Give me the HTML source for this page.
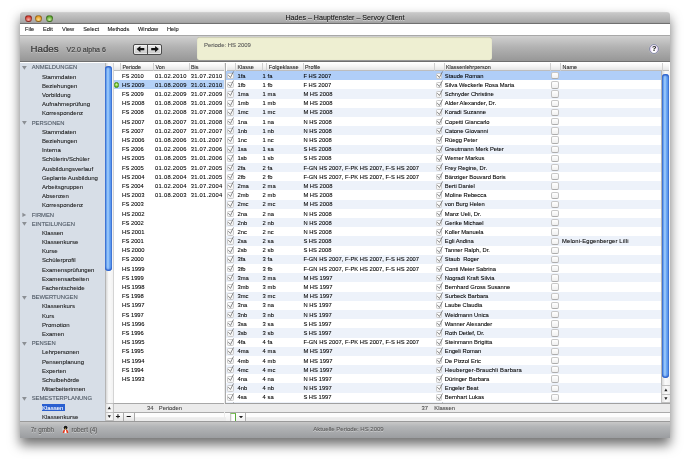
<!DOCTYPE html>
<html lang="de"><head><meta charset="utf-8"><title>Hades – Hauptfenster – Servoy Client</title>
<style>
*{box-sizing:border-box;margin:0;padding:0}
html,body{width:690px;height:465px;background:#fff;overflow:hidden}
body{font-family:"Liberation Sans",sans-serif;font-size:5.8px;color:#000;position:relative;-webkit-text-stroke:.08px currentColor}
.abs,.win *{position:absolute}
.win{position:absolute;left:20px;top:12px;width:650px;height:426px;background:#fff;border-radius:3px 3px 0 0;
 box-shadow:0 6.5px 12px rgba(0,0,0,.56);will-change:opacity;filter:contrast(1)}
.title{left:0;top:0;width:650px;height:12px;border-radius:3px 3px 0 0;background:linear-gradient(#d6d6d6,#c8c8c8 8%,#a7a7a7 87%,#707070 94%,#707070);}
.title .t{left:0;width:650px;top:0;height:12px;line-height:12px;text-align:center;font-size:7.1px;color:#111;text-shadow:0 .5px 0 rgba(255,255,255,.5)}
.dot{width:7.2px;height:7.2px;border-radius:50%;top:2.7px}
.menu{left:0;top:12px;width:650px;height:11px;background:#fff}
.menu span{top:0;height:11px;line-height:11px;font-size:5.7px;color:#111}
.tool{left:0;top:22.6px;width:650px;height:27.9px;background:linear-gradient(#d0d0d0,#b2b2b2 45%,#979797);border-top:1px solid #a8a8a8;border-bottom:1px solid #6f6f6f}
.row{left:0;height:9.19px;line-height:9.19px;white-space:nowrap}
.row span{top:.7px;height:9.19px;line-height:9.19px;white-space:pre}
.side{left:0;top:50.5px;width:84.5px;height:358.5px;background:#d7dee7;overflow:hidden}
.side .g{color:#525c68;-webkit-text-stroke:.12px #525c68;left:11.7px;font-size:5.85px}
.side .i{color:#1a1a1a;left:21.9px;font-size:6.05px;letter-spacing:.01px}
.side .tri{left:2px;top:3.1px;width:4.8px;height:3.8px}
.hdr{height:8.5px;background:linear-gradient(#fff,#f4f4f4 50%,#e6e6e6);border-bottom:1px solid #bdbdbd;top:50.5px}
.hdr span{top:0;height:8px;line-height:8.2px;color:#222;font-size:5.4px;border-left:1px solid #cfcfcf;padding-left:1.5px;white-space:nowrap}
.row .cb{width:6.4px;height:6.6px;border:.7px solid #cbcbcb;border-radius:1.4px;background:linear-gradient(#fff,#f0f0f0);top:1.7px}
.row .ck{top:0;width:8px;height:9px}
</style></head><body>
<div class="win">

<div class="title"><div class="t">Hades – Hauptfenster – Servoy Client</div>
<div class="dot" style="left:4.6px;background:radial-gradient(circle at 50% 75%,#f9b4aa,#d63a2e 75%);border:.5px solid rgba(0,0,0,.35)"></div>
<div class="dot" style="left:15.3px;background:radial-gradient(circle at 50% 75%,#fbe08e,#e59a22 75%);border:.5px solid rgba(0,0,0,.35)"></div>
<div class="dot" style="left:26.1px;background:radial-gradient(circle at 50% 75%,#c9eca0,#5aa62c 75%);border:.5px solid rgba(0,0,0,.35)"></div>
</div>
<div class="menu">
<span style="left:5px">File</span>
<span style="left:23px">Edit</span>
<span style="left:42px">View</span>
<span style="left:63.3px">Select</span>
<span style="left:87.5px">Methods</span>
<span style="left:118px">Window</span>
<span style="left:147px">Help</span>
</div>
<div class="tool"><div style="left:0;top:.4px;width:650px;height:26px">
<div style="left:10.5px;top:5.6px;font-size:9.7px;line-height:14px;color:#383838;-webkit-text-stroke:.22px #383838;text-shadow:0 .6px 0 rgba(255,255,255,.35)">Hades</div>
<div style="left:46.5px;top:8px;font-size:7px;line-height:12px;color:#3c3c3c;-webkit-text-stroke:.15px #3c3c3c;white-space:nowrap;text-shadow:0 .6px 0 rgba(255,255,255,.3)">V2.0 alpha 6</div>
<div style="left:112.5px;top:8.5px;width:29.4px;height:10.2px;border:1px solid #4a4a4a;border-radius:2px;background:linear-gradient(#ececec,#c8c8c8);box-shadow:inset 0 0 0 .7px rgba(255,255,255,.7)"></div>
<div style="left:126.8px;top:9px;width:1px;height:9px;background:#4a4a4a"></div>
<svg style="left:112.5px;top:8.5px" width="30" height="10.2" viewBox="0 0 30 10.2"><path d="M3.6 5.1 L7.4 1.9 V4 H11.3 V6.2 H7.4 V8.3 Z" fill="#111"/><path d="M25.9 5.1 L22.1 1.9 V4 H18.2 V6.2 H22.1 V8.3 Z" fill="#111"/></svg>
<div style="left:177px;top:1.5px;width:295px;height:22.3px;background:#eeefd2;border-radius:2.5px;box-shadow:inset 0 .6px 1px rgba(0,0,0,.25)"></div>
<div style="left:184px;top:4.6px;font-size:5.95px;line-height:8px;color:#555;white-space:nowrap">Periode: HS 2009</div>
<div style="left:629px;top:7.7px;width:10.2px;height:10.2px;border-radius:50%;background:radial-gradient(ellipse 38% 60% at 50% 55%,#fff 70%,#e6d6f4);border:1px solid #8a90aa;box-shadow:0 0 .8px rgba(255,255,255,.6)"></div>
<div style="left:629px;top:7.7px;width:10.2px;height:10.2px;line-height:10.6px;text-align:center;font-size:7.2px;font-weight:bold;color:#111">?</div>
</div></div>
<div class="side">
<div class="row" style="top:0.30px"><svg class="tri" viewBox="0 0 4.8 3.8" style="overflow:visible"><path d="M0 0H4.8L2.4 3.8Z" fill="#8b8f94"/></svg><span class="g">ANMELDUNGEN</span></div>
<div class="row" style="top:9.49px"><span class="i">Stammdaten</span></div>
<div class="row" style="top:18.68px"><span class="i">Beziehungen</span></div>
<div class="row" style="top:27.87px"><span class="i">Vorbildung</span></div>
<div class="row" style="top:37.06px"><span class="i">Aufnahmeprüfung</span></div>
<div class="row" style="top:46.25px"><span class="i">Korrespondenz</span></div>
<div class="row" style="top:55.44px"><svg class="tri" viewBox="0 0 4.8 3.8" style="overflow:visible"><path d="M0 0H4.8L2.4 3.8Z" fill="#8b8f94"/></svg><span class="g">PERSONEN</span></div>
<div class="row" style="top:64.63px"><span class="i">Stammdaten</span></div>
<div class="row" style="top:73.82px"><span class="i">Beziehungen</span></div>
<div class="row" style="top:83.01px"><span class="i">Interna</span></div>
<div class="row" style="top:92.20px"><span class="i">Schülerin/Schüler</span></div>
<div class="row" style="top:101.39px"><span class="i">Ausbildungsverlauf</span></div>
<div class="row" style="top:110.58px"><span class="i">Geplante Ausbildung</span></div>
<div class="row" style="top:119.77px"><span class="i">Arbeitsgruppen</span></div>
<div class="row" style="top:128.96px"><span class="i">Absenzen</span></div>
<div class="row" style="top:138.15px"><span class="i">Korrespondenz</span></div>
<div class="row" style="top:147.34px"><svg class="tri" viewBox="0 0 4.8 3.8" style="overflow:visible"><path d="M.4 -.3L4.2 1.9L.4 4.1Z" fill="#8b8f94"/></svg><span class="g">FIRMEN</span></div>
<div class="row" style="top:156.53px"><svg class="tri" viewBox="0 0 4.8 3.8" style="overflow:visible"><path d="M0 0H4.8L2.4 3.8Z" fill="#8b8f94"/></svg><span class="g">EINTEILUNGEN</span></div>
<div class="row" style="top:165.72px"><span class="i">Klassen</span></div>
<div class="row" style="top:174.91px"><span class="i">Klassenkurse</span></div>
<div class="row" style="top:184.10px"><span class="i">Kurse</span></div>
<div class="row" style="top:193.29px"><span class="i">Schülerprofil</span></div>
<div class="row" style="top:202.48px"><span class="i">Examensprüfungen</span></div>
<div class="row" style="top:211.67px"><span class="i">Examensarbeiten</span></div>
<div class="row" style="top:220.86px"><span class="i">Fachentscheide</span></div>
<div class="row" style="top:230.05px"><svg class="tri" viewBox="0 0 4.8 3.8" style="overflow:visible"><path d="M0 0H4.8L2.4 3.8Z" fill="#8b8f94"/></svg><span class="g">BEWERTUNGEN</span></div>
<div class="row" style="top:239.24px"><span class="i">Klassenkurs</span></div>
<div class="row" style="top:248.43px"><span class="i">Kurs</span></div>
<div class="row" style="top:257.62px"><span class="i">Promotion</span></div>
<div class="row" style="top:266.81px"><span class="i">Examen</span></div>
<div class="row" style="top:276.00px"><svg class="tri" viewBox="0 0 4.8 3.8" style="overflow:visible"><path d="M0 0H4.8L2.4 3.8Z" fill="#8b8f94"/></svg><span class="g">PENSEN</span></div>
<div class="row" style="top:285.19px"><span class="i">Lehrpersonen</span></div>
<div class="row" style="top:294.38px"><span class="i">Pensenplanung</span></div>
<div class="row" style="top:303.57px"><span class="i">Experten</span></div>
<div class="row" style="top:312.76px"><span class="i">Schulbehörde</span></div>
<div class="row" style="top:321.95px"><span class="i">Mitarbeiterinnen</span></div>
<div class="row" style="top:331.14px"><svg class="tri" viewBox="0 0 4.8 3.8" style="overflow:visible"><path d="M0 0H4.8L2.4 3.8Z" fill="#8b8f94"/></svg><span class="g">SEMESTERPLANUNG</span></div>
<div class="row" style="top:340.33px"><span style="left:21.5px;top:1.4px;width:23.5px;height:7px;background:#2a5fd0"></span><span class="i" style="color:#fff">Klassen</span></div>
<div class="row" style="top:349.52px"><span class="i">Klassenkurse</span></div>
</div>
<div style="left:84.5px;top:50.5px;width:8px;height:358.5px;background:linear-gradient(90deg,#d8d8d8,#fafafa 40%,#f2f2f2);border-left:1px solid #b5b5b5"></div>
<div style="left:85.2px;top:53.6px;width:6.7px;height:205.2px;border-radius:3.4px;background:linear-gradient(90deg,#3f72cf,#6ea8f2 22%,#a5cffb 42%,#6aa6f3 65%,#5a96ec 85%,#4178d2);box-shadow:inset 0 -1.5px 1.5px #2a5cc8,inset 0 1.5px 1.5px #2a5cc8"></div>
<div style="left:84.5px;top:391px;width:8px;height:18px;background:linear-gradient(90deg,#e4e4e4,#fbfbfb 50%,#ededed);border:1px solid #c0c0c0;border-right:0"></div>
<div style="left:85.5px;top:400px;width:7px;height:.8px;background:#c0c0c0"></div>
<svg style="left:84.5px;top:391px" width="8" height="18" viewBox="0 0 8 18"><path d="M4.3 3.6 L5.9 6.2 H2.7Z M4.3 14.9 L5.9 12.3 H2.7Z" fill="#222"/></svg>

<div style="left:92.5px;top:50.5px;width:111.2px;height:340.5px;background:#fff;overflow:hidden;border-left:1px solid #d4d4d4">
<div class="row" style="top:8.50px;width:111px"><span style="left:8.6px;letter-spacing:-.05px">FS 2010</span><span style="left:41.6px;letter-spacing:.27px">01.02.2010</span><span style="left:77.2px;letter-spacing:.27px">31.07.2010</span></div>
<div class="row" style="top:17.69px;width:111px;background:#b4d1f7"><span style="left:.1px;top:1.9px;width:5.7px;height:5.7px;border-radius:50%;background:radial-gradient(circle at 50% 40%,#d9f7a0,#6cc21f 70%,#4c9a10);border:.5px solid #4b8f12"></span><span style="left:8.6px;letter-spacing:-.05px">HS 2009</span><span style="left:41.6px;letter-spacing:.27px">01.08.2009</span><span style="left:77.2px;letter-spacing:.27px">31.01.2010</span></div>
<div class="row" style="top:26.88px;width:111px"><span style="left:8.6px;letter-spacing:-.05px">FS 2009</span><span style="left:41.6px;letter-spacing:.27px">01.02.2009</span><span style="left:77.2px;letter-spacing:.27px">31.07.2009</span></div>
<div class="row" style="top:36.07px;width:111px"><span style="left:8.6px;letter-spacing:-.05px">HS 2008</span><span style="left:41.6px;letter-spacing:.27px">01.08.2008</span><span style="left:77.2px;letter-spacing:.27px">31.01.2009</span></div>
<div class="row" style="top:45.26px;width:111px"><span style="left:8.6px;letter-spacing:-.05px">FS 2008</span><span style="left:41.6px;letter-spacing:.27px">01.02.2008</span><span style="left:77.2px;letter-spacing:.27px">31.07.2008</span></div>
<div class="row" style="top:54.45px;width:111px"><span style="left:8.6px;letter-spacing:-.05px">HS 2007</span><span style="left:41.6px;letter-spacing:.27px">01.08.2007</span><span style="left:77.2px;letter-spacing:.27px">31.01.2008</span></div>
<div class="row" style="top:63.64px;width:111px"><span style="left:8.6px;letter-spacing:-.05px">FS 2007</span><span style="left:41.6px;letter-spacing:.27px">01.02.2007</span><span style="left:77.2px;letter-spacing:.27px">31.07.2007</span></div>
<div class="row" style="top:72.83px;width:111px"><span style="left:8.6px;letter-spacing:-.05px">HS 2006</span><span style="left:41.6px;letter-spacing:.27px">01.08.2006</span><span style="left:77.2px;letter-spacing:.27px">31.01.2007</span></div>
<div class="row" style="top:82.02px;width:111px"><span style="left:8.6px;letter-spacing:-.05px">FS 2006</span><span style="left:41.6px;letter-spacing:.27px">01.02.2006</span><span style="left:77.2px;letter-spacing:.27px">31.07.2006</span></div>
<div class="row" style="top:91.21px;width:111px"><span style="left:8.6px;letter-spacing:-.05px">HS 2005</span><span style="left:41.6px;letter-spacing:.27px">01.08.2005</span><span style="left:77.2px;letter-spacing:.27px">31.01.2006</span></div>
<div class="row" style="top:100.40px;width:111px"><span style="left:8.6px;letter-spacing:-.05px">FS 2005</span><span style="left:41.6px;letter-spacing:.27px">01.02.2005</span><span style="left:77.2px;letter-spacing:.27px">31.07.2005</span></div>
<div class="row" style="top:109.59px;width:111px"><span style="left:8.6px;letter-spacing:-.05px">HS 2004</span><span style="left:41.6px;letter-spacing:.27px">01.08.2004</span><span style="left:77.2px;letter-spacing:.27px">31.01.2005</span></div>
<div class="row" style="top:118.78px;width:111px"><span style="left:8.6px;letter-spacing:-.05px">FS 2004</span><span style="left:41.6px;letter-spacing:.27px">01.02.2004</span><span style="left:77.2px;letter-spacing:.27px">31.07.2004</span></div>
<div class="row" style="top:127.97px;width:111px"><span style="left:8.6px;letter-spacing:-.05px">HS 2003</span><span style="left:41.6px;letter-spacing:.27px">01.08.2003</span><span style="left:77.2px;letter-spacing:.27px">31.01.2004</span></div>
<div class="row" style="top:137.16px;width:111px"><span style="left:8.6px;letter-spacing:-.05px">FS 2003</span><span style="left:41.6px;letter-spacing:.27px"></span><span style="left:77.2px;letter-spacing:.27px"></span></div>
<div class="row" style="top:146.35px;width:111px"><span style="left:8.6px;letter-spacing:-.05px">HS 2002</span><span style="left:41.6px;letter-spacing:.27px"></span><span style="left:77.2px;letter-spacing:.27px"></span></div>
<div class="row" style="top:155.54px;width:111px"><span style="left:8.6px;letter-spacing:-.05px">FS 2002</span><span style="left:41.6px;letter-spacing:.27px"></span><span style="left:77.2px;letter-spacing:.27px"></span></div>
<div class="row" style="top:164.73px;width:111px"><span style="left:8.6px;letter-spacing:-.05px">HS 2001</span><span style="left:41.6px;letter-spacing:.27px"></span><span style="left:77.2px;letter-spacing:.27px"></span></div>
<div class="row" style="top:173.92px;width:111px"><span style="left:8.6px;letter-spacing:-.05px">FS 2001</span><span style="left:41.6px;letter-spacing:.27px"></span><span style="left:77.2px;letter-spacing:.27px"></span></div>
<div class="row" style="top:183.11px;width:111px"><span style="left:8.6px;letter-spacing:-.05px">HS 2000</span><span style="left:41.6px;letter-spacing:.27px"></span><span style="left:77.2px;letter-spacing:.27px"></span></div>
<div class="row" style="top:192.30px;width:111px"><span style="left:8.6px;letter-spacing:-.05px">FS 2000</span><span style="left:41.6px;letter-spacing:.27px"></span><span style="left:77.2px;letter-spacing:.27px"></span></div>
<div class="row" style="top:201.49px;width:111px"><span style="left:8.6px;letter-spacing:-.05px">HS 1999</span><span style="left:41.6px;letter-spacing:.27px"></span><span style="left:77.2px;letter-spacing:.27px"></span></div>
<div class="row" style="top:210.68px;width:111px"><span style="left:8.6px;letter-spacing:-.05px">FS 1999</span><span style="left:41.6px;letter-spacing:.27px"></span><span style="left:77.2px;letter-spacing:.27px"></span></div>
<div class="row" style="top:219.87px;width:111px"><span style="left:8.6px;letter-spacing:-.05px">HS 1998</span><span style="left:41.6px;letter-spacing:.27px"></span><span style="left:77.2px;letter-spacing:.27px"></span></div>
<div class="row" style="top:229.06px;width:111px"><span style="left:8.6px;letter-spacing:-.05px">FS 1998</span><span style="left:41.6px;letter-spacing:.27px"></span><span style="left:77.2px;letter-spacing:.27px"></span></div>
<div class="row" style="top:238.25px;width:111px"><span style="left:8.6px;letter-spacing:-.05px">HS 1997</span><span style="left:41.6px;letter-spacing:.27px"></span><span style="left:77.2px;letter-spacing:.27px"></span></div>
<div class="row" style="top:247.44px;width:111px"><span style="left:8.6px;letter-spacing:-.05px">FS 1997</span><span style="left:41.6px;letter-spacing:.27px"></span><span style="left:77.2px;letter-spacing:.27px"></span></div>
<div class="row" style="top:256.63px;width:111px"><span style="left:8.6px;letter-spacing:-.05px">HS 1996</span><span style="left:41.6px;letter-spacing:.27px"></span><span style="left:77.2px;letter-spacing:.27px"></span></div>
<div class="row" style="top:265.82px;width:111px"><span style="left:8.6px;letter-spacing:-.05px">FS 1996</span><span style="left:41.6px;letter-spacing:.27px"></span><span style="left:77.2px;letter-spacing:.27px"></span></div>
<div class="row" style="top:275.01px;width:111px"><span style="left:8.6px;letter-spacing:-.05px">HS 1995</span><span style="left:41.6px;letter-spacing:.27px"></span><span style="left:77.2px;letter-spacing:.27px"></span></div>
<div class="row" style="top:284.20px;width:111px"><span style="left:8.6px;letter-spacing:-.05px">FS 1995</span><span style="left:41.6px;letter-spacing:.27px"></span><span style="left:77.2px;letter-spacing:.27px"></span></div>
<div class="row" style="top:293.39px;width:111px"><span style="left:8.6px;letter-spacing:-.05px">HS 1994</span><span style="left:41.6px;letter-spacing:.27px"></span><span style="left:77.2px;letter-spacing:.27px"></span></div>
<div class="row" style="top:302.58px;width:111px"><span style="left:8.6px;letter-spacing:-.05px">FS 1994</span><span style="left:41.6px;letter-spacing:.27px"></span><span style="left:77.2px;letter-spacing:.27px"></span></div>
<div class="row" style="top:311.77px;width:111px"><span style="left:8.6px;letter-spacing:-.05px">HS 1993</span><span style="left:41.6px;letter-spacing:.27px"></span><span style="left:77.2px;letter-spacing:.27px"></span></div>
</div>
<div class="hdr" style="left:93.5px;width:110.2px"><span style="left:6.5px;width:33px">Periode</span><span style="left:39.5px;width:35.5px">Von</span><span style="left:75px;width:35.2px">Bis</span></div>
<div style="left:203.7px;top:50.5px;width:1px;height:358.5px;background:#ececec"></div><div style="left:204.6px;top:50.5px;width:.7px;height:358.5px;background:#ababab"></div>
<div style="left:92.5px;top:391px;width:111.2px;height:9px;background:#ebebeb;border-top:1px solid #a8a8a8;border-left:1px solid #c0c0c0"></div>
<div style="left:113px;top:391.5px;width:20.5px;height:9px;line-height:9px;text-align:right;color:#444">34</div>
<div style="left:138.8px;top:391.5px;height:9px;line-height:9px;color:#444">Perioden</div>
<div style="left:92.5px;top:400px;width:111.2px;height:9px;background:linear-gradient(#fdfdfd 50%,#ececec 58%);border-top:1px solid #ababab;border-left:1px solid #c0c0c0"></div>
<div style="left:93.5px;top:401px;width:10px;height:8px;border-right:1px solid #aaa;background:linear-gradient(#fdfdfd,#e4e4e4);text-align:center;line-height:7.6px;font-size:7.5px;color:#111;-webkit-text-stroke:.3px #111">+</div>
<div style="left:103.5px;top:401px;width:11.2px;height:8px;border-right:1px solid #aaa;background:linear-gradient(#fdfdfd,#e4e4e4);text-align:center;line-height:7.6px;font-size:7.5px;color:#111;-webkit-text-stroke:.3px #111">−</div>


<div style="left:206px;top:50.5px;width:435px;height:340.5px;background:#fff;overflow:hidden">
<div class="row" style="top:8.50px;width:435px;background:#b0cef8"><span class="cb" style="left:1.4px"></span><svg class="ck" style="left:1.4px" viewBox="0 0 8 9"><path d="M1.1 4 L3.5 6.4 L6.5 0.5" fill="none" stroke="#5e5e5e" stroke-width="0.72" stroke-linejoin="round"/></svg><span style="left:11.5px">1fa</span><span style="left:36.6px">1</span><span style="left:41.6px">fa</span><span style="left:77.4px">F HS 2007</span><span class="cb" style="left:210px"></span><svg class="ck" style="left:210px" viewBox="0 0 8 9"><path d="M1.1 4 L3.5 6.4 L6.5 0.5" fill="none" stroke="#5e5e5e" stroke-width="0.72" stroke-linejoin="round"/></svg><span style="left:218.8px">Staude Roman</span><span class="cb" style="left:325.4px;width:7.4px;height:7.3px;top:1.1px;border-radius:2px;border-color:#c8c8c8 #c2c2c2 #adadad"></span></div>
<div class="row" style="top:17.69px;width:435px;background:#fff"><span class="cb" style="left:1.4px"></span><svg class="ck" style="left:1.4px" viewBox="0 0 8 9"><path d="M1.1 4 L3.5 6.4 L6.5 0.5" fill="none" stroke="#5e5e5e" stroke-width="0.72" stroke-linejoin="round"/></svg><span style="left:11.5px">1fb</span><span style="left:36.6px">1</span><span style="left:41.6px">fb</span><span style="left:77.4px">F HS 2007</span><span class="cb" style="left:210px"></span><svg class="ck" style="left:210px" viewBox="0 0 8 9"><path d="M1.1 4 L3.5 6.4 L6.5 0.5" fill="none" stroke="#5e5e5e" stroke-width="0.72" stroke-linejoin="round"/></svg><span style="left:218.8px">Silva Weckerle Rosa Maria</span><span class="cb" style="left:325.4px;width:7.4px;height:7.3px;top:1.1px;border-radius:2px;border-color:#c8c8c8 #c2c2c2 #adadad"></span></div>
<div class="row" style="top:26.88px;width:435px;background:#edf2fa"><span class="cb" style="left:1.4px"></span><svg class="ck" style="left:1.4px" viewBox="0 0 8 9"><path d="M1.1 4 L3.5 6.4 L6.5 0.5" fill="none" stroke="#5e5e5e" stroke-width="0.72" stroke-linejoin="round"/></svg><span style="left:11.5px">1ma</span><span style="left:36.6px">1</span><span style="left:41.6px">ma</span><span style="left:77.4px">M HS 2008</span><span class="cb" style="left:210px"></span><svg class="ck" style="left:210px" viewBox="0 0 8 9"><path d="M1.1 4 L3.5 6.4 L6.5 0.5" fill="none" stroke="#5e5e5e" stroke-width="0.72" stroke-linejoin="round"/></svg><span style="left:218.8px">Schnyder Christine</span><span class="cb" style="left:325.4px;width:7.4px;height:7.3px;top:1.1px;border-radius:2px;border-color:#c8c8c8 #c2c2c2 #adadad"></span></div>
<div class="row" style="top:36.07px;width:435px;background:#fff"><span class="cb" style="left:1.4px"></span><svg class="ck" style="left:1.4px" viewBox="0 0 8 9"><path d="M1.1 4 L3.5 6.4 L6.5 0.5" fill="none" stroke="#5e5e5e" stroke-width="0.72" stroke-linejoin="round"/></svg><span style="left:11.5px">1mb</span><span style="left:36.6px">1</span><span style="left:41.6px">mb</span><span style="left:77.4px">M HS 2008</span><span class="cb" style="left:210px"></span><svg class="ck" style="left:210px" viewBox="0 0 8 9"><path d="M1.1 4 L3.5 6.4 L6.5 0.5" fill="none" stroke="#5e5e5e" stroke-width="0.72" stroke-linejoin="round"/></svg><span style="left:218.8px">Alder Alexander, Dr.</span><span class="cb" style="left:325.4px;width:7.4px;height:7.3px;top:1.1px;border-radius:2px;border-color:#c8c8c8 #c2c2c2 #adadad"></span></div>
<div class="row" style="top:45.26px;width:435px;background:#edf2fa"><span class="cb" style="left:1.4px"></span><svg class="ck" style="left:1.4px" viewBox="0 0 8 9"><path d="M1.1 4 L3.5 6.4 L6.5 0.5" fill="none" stroke="#5e5e5e" stroke-width="0.72" stroke-linejoin="round"/></svg><span style="left:11.5px">1mc</span><span style="left:36.6px">1</span><span style="left:41.6px">mc</span><span style="left:77.4px">M HS 2008</span><span class="cb" style="left:210px"></span><svg class="ck" style="left:210px" viewBox="0 0 8 9"><path d="M1.1 4 L3.5 6.4 L6.5 0.5" fill="none" stroke="#5e5e5e" stroke-width="0.72" stroke-linejoin="round"/></svg><span style="left:218.8px">Koradi Suzanne</span><span class="cb" style="left:325.4px;width:7.4px;height:7.3px;top:1.1px;border-radius:2px;border-color:#c8c8c8 #c2c2c2 #adadad"></span></div>
<div class="row" style="top:54.45px;width:435px;background:#fff"><span class="cb" style="left:1.4px"></span><svg class="ck" style="left:1.4px" viewBox="0 0 8 9"><path d="M1.1 4 L3.5 6.4 L6.5 0.5" fill="none" stroke="#5e5e5e" stroke-width="0.72" stroke-linejoin="round"/></svg><span style="left:11.5px">1na</span><span style="left:36.6px">1</span><span style="left:41.6px">na</span><span style="left:77.4px">N HS 2008</span><span class="cb" style="left:210px"></span><svg class="ck" style="left:210px" viewBox="0 0 8 9"><path d="M1.1 4 L3.5 6.4 L6.5 0.5" fill="none" stroke="#5e5e5e" stroke-width="0.72" stroke-linejoin="round"/></svg><span style="left:218.8px">Copetti Giancarlo</span><span class="cb" style="left:325.4px;width:7.4px;height:7.3px;top:1.1px;border-radius:2px;border-color:#c8c8c8 #c2c2c2 #adadad"></span></div>
<div class="row" style="top:63.64px;width:435px;background:#edf2fa"><span class="cb" style="left:1.4px"></span><svg class="ck" style="left:1.4px" viewBox="0 0 8 9"><path d="M1.1 4 L3.5 6.4 L6.5 0.5" fill="none" stroke="#5e5e5e" stroke-width="0.72" stroke-linejoin="round"/></svg><span style="left:11.5px">1nb</span><span style="left:36.6px">1</span><span style="left:41.6px">nb</span><span style="left:77.4px">N HS 2008</span><span class="cb" style="left:210px"></span><svg class="ck" style="left:210px" viewBox="0 0 8 9"><path d="M1.1 4 L3.5 6.4 L6.5 0.5" fill="none" stroke="#5e5e5e" stroke-width="0.72" stroke-linejoin="round"/></svg><span style="left:218.8px">Catone Giovanni</span><span class="cb" style="left:325.4px;width:7.4px;height:7.3px;top:1.1px;border-radius:2px;border-color:#c8c8c8 #c2c2c2 #adadad"></span></div>
<div class="row" style="top:72.83px;width:435px;background:#fff"><span class="cb" style="left:1.4px"></span><svg class="ck" style="left:1.4px" viewBox="0 0 8 9"><path d="M1.1 4 L3.5 6.4 L6.5 0.5" fill="none" stroke="#5e5e5e" stroke-width="0.72" stroke-linejoin="round"/></svg><span style="left:11.5px">1nc</span><span style="left:36.6px">1</span><span style="left:41.6px">nc</span><span style="left:77.4px">N HS 2008</span><span class="cb" style="left:210px"></span><svg class="ck" style="left:210px" viewBox="0 0 8 9"><path d="M1.1 4 L3.5 6.4 L6.5 0.5" fill="none" stroke="#5e5e5e" stroke-width="0.72" stroke-linejoin="round"/></svg><span style="left:218.8px">Rüegg Peter</span><span class="cb" style="left:325.4px;width:7.4px;height:7.3px;top:1.1px;border-radius:2px;border-color:#c8c8c8 #c2c2c2 #adadad"></span></div>
<div class="row" style="top:82.02px;width:435px;background:#edf2fa"><span class="cb" style="left:1.4px"></span><svg class="ck" style="left:1.4px" viewBox="0 0 8 9"><path d="M1.1 4 L3.5 6.4 L6.5 0.5" fill="none" stroke="#5e5e5e" stroke-width="0.72" stroke-linejoin="round"/></svg><span style="left:11.5px">1sa</span><span style="left:36.6px">1</span><span style="left:41.6px">sa</span><span style="left:77.4px">S HS 2008</span><span class="cb" style="left:210px"></span><svg class="ck" style="left:210px" viewBox="0 0 8 9"><path d="M1.1 4 L3.5 6.4 L6.5 0.5" fill="none" stroke="#5e5e5e" stroke-width="0.72" stroke-linejoin="round"/></svg><span style="left:218.8px">Greutmann Merk Peter</span><span class="cb" style="left:325.4px;width:7.4px;height:7.3px;top:1.1px;border-radius:2px;border-color:#c8c8c8 #c2c2c2 #adadad"></span></div>
<div class="row" style="top:91.21px;width:435px;background:#fff"><span class="cb" style="left:1.4px"></span><svg class="ck" style="left:1.4px" viewBox="0 0 8 9"><path d="M1.1 4 L3.5 6.4 L6.5 0.5" fill="none" stroke="#5e5e5e" stroke-width="0.72" stroke-linejoin="round"/></svg><span style="left:11.5px">1sb</span><span style="left:36.6px">1</span><span style="left:41.6px">sb</span><span style="left:77.4px">S HS 2008</span><span class="cb" style="left:210px"></span><svg class="ck" style="left:210px" viewBox="0 0 8 9"><path d="M1.1 4 L3.5 6.4 L6.5 0.5" fill="none" stroke="#5e5e5e" stroke-width="0.72" stroke-linejoin="round"/></svg><span style="left:218.8px">Werner Markus</span><span class="cb" style="left:325.4px;width:7.4px;height:7.3px;top:1.1px;border-radius:2px;border-color:#c8c8c8 #c2c2c2 #adadad"></span></div>
<div class="row" style="top:100.40px;width:435px;background:#edf2fa"><span class="cb" style="left:1.4px"></span><svg class="ck" style="left:1.4px" viewBox="0 0 8 9"><path d="M1.1 4 L3.5 6.4 L6.5 0.5" fill="none" stroke="#5e5e5e" stroke-width="0.72" stroke-linejoin="round"/></svg><span style="left:11.5px">2fa</span><span style="left:36.6px">2</span><span style="left:41.6px">fa</span><span style="left:77.4px">F-GN HS 2007, F-PK HS 2007, F-S HS 2007</span><span class="cb" style="left:210px"></span><svg class="ck" style="left:210px" viewBox="0 0 8 9"><path d="M1.1 4 L3.5 6.4 L6.5 0.5" fill="none" stroke="#5e5e5e" stroke-width="0.72" stroke-linejoin="round"/></svg><span style="left:218.8px">Frey Regine, Dr.</span><span class="cb" style="left:325.4px;width:7.4px;height:7.3px;top:1.1px;border-radius:2px;border-color:#c8c8c8 #c2c2c2 #adadad"></span></div>
<div class="row" style="top:109.59px;width:435px;background:#fff"><span class="cb" style="left:1.4px"></span><svg class="ck" style="left:1.4px" viewBox="0 0 8 9"><path d="M1.1 4 L3.5 6.4 L6.5 0.5" fill="none" stroke="#5e5e5e" stroke-width="0.72" stroke-linejoin="round"/></svg><span style="left:11.5px">2fb</span><span style="left:36.6px">2</span><span style="left:41.6px">fb</span><span style="left:77.4px">F-GN HS 2007, F-PK HS 2007, F-S HS 2007</span><span class="cb" style="left:210px"></span><svg class="ck" style="left:210px" viewBox="0 0 8 9"><path d="M1.1 4 L3.5 6.4 L6.5 0.5" fill="none" stroke="#5e5e5e" stroke-width="0.72" stroke-linejoin="round"/></svg><span style="left:218.8px">Bänziger Bouvard Boris</span><span class="cb" style="left:325.4px;width:7.4px;height:7.3px;top:1.1px;border-radius:2px;border-color:#c8c8c8 #c2c2c2 #adadad"></span></div>
<div class="row" style="top:118.78px;width:435px;background:#edf2fa"><span class="cb" style="left:1.4px"></span><svg class="ck" style="left:1.4px" viewBox="0 0 8 9"><path d="M1.1 4 L3.5 6.4 L6.5 0.5" fill="none" stroke="#5e5e5e" stroke-width="0.72" stroke-linejoin="round"/></svg><span style="left:11.5px">2ma</span><span style="left:36.6px">2</span><span style="left:41.6px">ma</span><span style="left:77.4px">M HS 2008</span><span class="cb" style="left:210px"></span><svg class="ck" style="left:210px" viewBox="0 0 8 9"><path d="M1.1 4 L3.5 6.4 L6.5 0.5" fill="none" stroke="#5e5e5e" stroke-width="0.72" stroke-linejoin="round"/></svg><span style="left:218.8px">Berti Daniel</span><span class="cb" style="left:325.4px;width:7.4px;height:7.3px;top:1.1px;border-radius:2px;border-color:#c8c8c8 #c2c2c2 #adadad"></span></div>
<div class="row" style="top:127.97px;width:435px;background:#fff"><span class="cb" style="left:1.4px"></span><svg class="ck" style="left:1.4px" viewBox="0 0 8 9"><path d="M1.1 4 L3.5 6.4 L6.5 0.5" fill="none" stroke="#5e5e5e" stroke-width="0.72" stroke-linejoin="round"/></svg><span style="left:11.5px">2mb</span><span style="left:36.6px">2</span><span style="left:41.6px">mb</span><span style="left:77.4px">M HS 2008</span><span class="cb" style="left:210px"></span><svg class="ck" style="left:210px" viewBox="0 0 8 9"><path d="M1.1 4 L3.5 6.4 L6.5 0.5" fill="none" stroke="#5e5e5e" stroke-width="0.72" stroke-linejoin="round"/></svg><span style="left:218.8px">Moline Rebecca</span><span class="cb" style="left:325.4px;width:7.4px;height:7.3px;top:1.1px;border-radius:2px;border-color:#c8c8c8 #c2c2c2 #adadad"></span></div>
<div class="row" style="top:137.16px;width:435px;background:#edf2fa"><span class="cb" style="left:1.4px"></span><svg class="ck" style="left:1.4px" viewBox="0 0 8 9"><path d="M1.1 4 L3.5 6.4 L6.5 0.5" fill="none" stroke="#5e5e5e" stroke-width="0.72" stroke-linejoin="round"/></svg><span style="left:11.5px">2mc</span><span style="left:36.6px">2</span><span style="left:41.6px">mc</span><span style="left:77.4px">M HS 2008</span><span class="cb" style="left:210px"></span><svg class="ck" style="left:210px" viewBox="0 0 8 9"><path d="M1.1 4 L3.5 6.4 L6.5 0.5" fill="none" stroke="#5e5e5e" stroke-width="0.72" stroke-linejoin="round"/></svg><span style="left:218.8px">von Burg Helen</span><span class="cb" style="left:325.4px;width:7.4px;height:7.3px;top:1.1px;border-radius:2px;border-color:#c8c8c8 #c2c2c2 #adadad"></span></div>
<div class="row" style="top:146.35px;width:435px;background:#fff"><span class="cb" style="left:1.4px"></span><svg class="ck" style="left:1.4px" viewBox="0 0 8 9"><path d="M1.1 4 L3.5 6.4 L6.5 0.5" fill="none" stroke="#5e5e5e" stroke-width="0.72" stroke-linejoin="round"/></svg><span style="left:11.5px">2na</span><span style="left:36.6px">2</span><span style="left:41.6px">na</span><span style="left:77.4px">N HS 2008</span><span class="cb" style="left:210px"></span><svg class="ck" style="left:210px" viewBox="0 0 8 9"><path d="M1.1 4 L3.5 6.4 L6.5 0.5" fill="none" stroke="#5e5e5e" stroke-width="0.72" stroke-linejoin="round"/></svg><span style="left:218.8px">Manz Ueli, Dr.</span><span class="cb" style="left:325.4px;width:7.4px;height:7.3px;top:1.1px;border-radius:2px;border-color:#c8c8c8 #c2c2c2 #adadad"></span></div>
<div class="row" style="top:155.54px;width:435px;background:#edf2fa"><span class="cb" style="left:1.4px"></span><svg class="ck" style="left:1.4px" viewBox="0 0 8 9"><path d="M1.1 4 L3.5 6.4 L6.5 0.5" fill="none" stroke="#5e5e5e" stroke-width="0.72" stroke-linejoin="round"/></svg><span style="left:11.5px">2nb</span><span style="left:36.6px">2</span><span style="left:41.6px">nb</span><span style="left:77.4px">N HS 2008</span><span class="cb" style="left:210px"></span><svg class="ck" style="left:210px" viewBox="0 0 8 9"><path d="M1.1 4 L3.5 6.4 L6.5 0.5" fill="none" stroke="#5e5e5e" stroke-width="0.72" stroke-linejoin="round"/></svg><span style="left:218.8px">Gerike Michael</span><span class="cb" style="left:325.4px;width:7.4px;height:7.3px;top:1.1px;border-radius:2px;border-color:#c8c8c8 #c2c2c2 #adadad"></span></div>
<div class="row" style="top:164.73px;width:435px;background:#fff"><span class="cb" style="left:1.4px"></span><svg class="ck" style="left:1.4px" viewBox="0 0 8 9"><path d="M1.1 4 L3.5 6.4 L6.5 0.5" fill="none" stroke="#5e5e5e" stroke-width="0.72" stroke-linejoin="round"/></svg><span style="left:11.5px">2nc</span><span style="left:36.6px">2</span><span style="left:41.6px">nc</span><span style="left:77.4px">N HS 2008</span><span class="cb" style="left:210px"></span><svg class="ck" style="left:210px" viewBox="0 0 8 9"><path d="M1.1 4 L3.5 6.4 L6.5 0.5" fill="none" stroke="#5e5e5e" stroke-width="0.72" stroke-linejoin="round"/></svg><span style="left:218.8px">Koller Manuela</span><span class="cb" style="left:325.4px;width:7.4px;height:7.3px;top:1.1px;border-radius:2px;border-color:#c8c8c8 #c2c2c2 #adadad"></span></div>
<div class="row" style="top:173.92px;width:435px;background:#edf2fa"><span class="cb" style="left:1.4px"></span><svg class="ck" style="left:1.4px" viewBox="0 0 8 9"><path d="M1.1 4 L3.5 6.4 L6.5 0.5" fill="none" stroke="#5e5e5e" stroke-width="0.72" stroke-linejoin="round"/></svg><span style="left:11.5px">2sa</span><span style="left:36.6px">2</span><span style="left:41.6px">sa</span><span style="left:77.4px">S HS 2008</span><span class="cb" style="left:210px"></span><svg class="ck" style="left:210px" viewBox="0 0 8 9"><path d="M1.1 4 L3.5 6.4 L6.5 0.5" fill="none" stroke="#5e5e5e" stroke-width="0.72" stroke-linejoin="round"/></svg><span style="left:218.8px">Egli Andina</span><span class="cb" style="left:325.4px;width:7.4px;height:7.3px;top:1.1px;border-radius:2px;border-color:#c8c8c8 #c2c2c2 #adadad"></span><span style="left:336px;letter-spacing:.17px">Meloni-Eggenberger Lilli</span></div>
<div class="row" style="top:183.11px;width:435px;background:#fff"><span class="cb" style="left:1.4px"></span><svg class="ck" style="left:1.4px" viewBox="0 0 8 9"><path d="M1.1 4 L3.5 6.4 L6.5 0.5" fill="none" stroke="#5e5e5e" stroke-width="0.72" stroke-linejoin="round"/></svg><span style="left:11.5px">2sb</span><span style="left:36.6px">2</span><span style="left:41.6px">sb</span><span style="left:77.4px">S HS 2008</span><span class="cb" style="left:210px"></span><svg class="ck" style="left:210px" viewBox="0 0 8 9"><path d="M1.1 4 L3.5 6.4 L6.5 0.5" fill="none" stroke="#5e5e5e" stroke-width="0.72" stroke-linejoin="round"/></svg><span style="left:218.8px">Tanner Ralph, Dr.</span><span class="cb" style="left:325.4px;width:7.4px;height:7.3px;top:1.1px;border-radius:2px;border-color:#c8c8c8 #c2c2c2 #adadad"></span></div>
<div class="row" style="top:192.30px;width:435px;background:#edf2fa"><span class="cb" style="left:1.4px"></span><svg class="ck" style="left:1.4px" viewBox="0 0 8 9"><path d="M1.1 4 L3.5 6.4 L6.5 0.5" fill="none" stroke="#5e5e5e" stroke-width="0.72" stroke-linejoin="round"/></svg><span style="left:11.5px">3fa</span><span style="left:36.6px">3</span><span style="left:41.6px">fa</span><span style="left:77.4px">F-GN HS 2007, F-PK HS 2007, F-S HS 2007</span><span class="cb" style="left:210px"></span><svg class="ck" style="left:210px" viewBox="0 0 8 9"><path d="M1.1 4 L3.5 6.4 L6.5 0.5" fill="none" stroke="#5e5e5e" stroke-width="0.72" stroke-linejoin="round"/></svg><span style="left:218.8px">Staub  Roger</span><span class="cb" style="left:325.4px;width:7.4px;height:7.3px;top:1.1px;border-radius:2px;border-color:#c8c8c8 #c2c2c2 #adadad"></span></div>
<div class="row" style="top:201.49px;width:435px;background:#fff"><span class="cb" style="left:1.4px"></span><svg class="ck" style="left:1.4px" viewBox="0 0 8 9"><path d="M1.1 4 L3.5 6.4 L6.5 0.5" fill="none" stroke="#5e5e5e" stroke-width="0.72" stroke-linejoin="round"/></svg><span style="left:11.5px">3fb</span><span style="left:36.6px">3</span><span style="left:41.6px">fb</span><span style="left:77.4px">F-GN HS 2007, F-PK HS 2007, F-S HS 2007</span><span class="cb" style="left:210px"></span><svg class="ck" style="left:210px" viewBox="0 0 8 9"><path d="M1.1 4 L3.5 6.4 L6.5 0.5" fill="none" stroke="#5e5e5e" stroke-width="0.72" stroke-linejoin="round"/></svg><span style="left:218.8px">Conti Meier Sabrina</span><span class="cb" style="left:325.4px;width:7.4px;height:7.3px;top:1.1px;border-radius:2px;border-color:#c8c8c8 #c2c2c2 #adadad"></span></div>
<div class="row" style="top:210.68px;width:435px;background:#edf2fa"><span class="cb" style="left:1.4px"></span><svg class="ck" style="left:1.4px" viewBox="0 0 8 9"><path d="M1.1 4 L3.5 6.4 L6.5 0.5" fill="none" stroke="#5e5e5e" stroke-width="0.72" stroke-linejoin="round"/></svg><span style="left:11.5px">3ma</span><span style="left:36.6px">3</span><span style="left:41.6px">ma</span><span style="left:77.4px">M HS 1997</span><span class="cb" style="left:210px"></span><svg class="ck" style="left:210px" viewBox="0 0 8 9"><path d="M1.1 4 L3.5 6.4 L6.5 0.5" fill="none" stroke="#5e5e5e" stroke-width="0.72" stroke-linejoin="round"/></svg><span style="left:218.8px">Nogradi Kraft Silvia</span><span class="cb" style="left:325.4px;width:7.4px;height:7.3px;top:1.1px;border-radius:2px;border-color:#c8c8c8 #c2c2c2 #adadad"></span></div>
<div class="row" style="top:219.87px;width:435px;background:#fff"><span class="cb" style="left:1.4px"></span><svg class="ck" style="left:1.4px" viewBox="0 0 8 9"><path d="M1.1 4 L3.5 6.4 L6.5 0.5" fill="none" stroke="#5e5e5e" stroke-width="0.72" stroke-linejoin="round"/></svg><span style="left:11.5px">3mb</span><span style="left:36.6px">3</span><span style="left:41.6px">mb</span><span style="left:77.4px">M HS 1997</span><span class="cb" style="left:210px"></span><svg class="ck" style="left:210px" viewBox="0 0 8 9"><path d="M1.1 4 L3.5 6.4 L6.5 0.5" fill="none" stroke="#5e5e5e" stroke-width="0.72" stroke-linejoin="round"/></svg><span style="left:218.8px">Bernhard Gross Susanne</span><span class="cb" style="left:325.4px;width:7.4px;height:7.3px;top:1.1px;border-radius:2px;border-color:#c8c8c8 #c2c2c2 #adadad"></span></div>
<div class="row" style="top:229.06px;width:435px;background:#edf2fa"><span class="cb" style="left:1.4px"></span><svg class="ck" style="left:1.4px" viewBox="0 0 8 9"><path d="M1.1 4 L3.5 6.4 L6.5 0.5" fill="none" stroke="#5e5e5e" stroke-width="0.72" stroke-linejoin="round"/></svg><span style="left:11.5px">3mc</span><span style="left:36.6px">3</span><span style="left:41.6px">mc</span><span style="left:77.4px">M HS 1997</span><span class="cb" style="left:210px"></span><svg class="ck" style="left:210px" viewBox="0 0 8 9"><path d="M1.1 4 L3.5 6.4 L6.5 0.5" fill="none" stroke="#5e5e5e" stroke-width="0.72" stroke-linejoin="round"/></svg><span style="left:218.8px">Surbeck Barbara</span><span class="cb" style="left:325.4px;width:7.4px;height:7.3px;top:1.1px;border-radius:2px;border-color:#c8c8c8 #c2c2c2 #adadad"></span></div>
<div class="row" style="top:238.25px;width:435px;background:#fff"><span class="cb" style="left:1.4px"></span><svg class="ck" style="left:1.4px" viewBox="0 0 8 9"><path d="M1.1 4 L3.5 6.4 L6.5 0.5" fill="none" stroke="#5e5e5e" stroke-width="0.72" stroke-linejoin="round"/></svg><span style="left:11.5px">3na</span><span style="left:36.6px">3</span><span style="left:41.6px">na</span><span style="left:77.4px">N HS 1997</span><span class="cb" style="left:210px"></span><svg class="ck" style="left:210px" viewBox="0 0 8 9"><path d="M1.1 4 L3.5 6.4 L6.5 0.5" fill="none" stroke="#5e5e5e" stroke-width="0.72" stroke-linejoin="round"/></svg><span style="left:218.8px">Laube Claudia</span><span class="cb" style="left:325.4px;width:7.4px;height:7.3px;top:1.1px;border-radius:2px;border-color:#c8c8c8 #c2c2c2 #adadad"></span></div>
<div class="row" style="top:247.44px;width:435px;background:#edf2fa"><span class="cb" style="left:1.4px"></span><svg class="ck" style="left:1.4px" viewBox="0 0 8 9"><path d="M1.1 4 L3.5 6.4 L6.5 0.5" fill="none" stroke="#5e5e5e" stroke-width="0.72" stroke-linejoin="round"/></svg><span style="left:11.5px">3nb</span><span style="left:36.6px">3</span><span style="left:41.6px">nb</span><span style="left:77.4px">N HS 1997</span><span class="cb" style="left:210px"></span><svg class="ck" style="left:210px" viewBox="0 0 8 9"><path d="M1.1 4 L3.5 6.4 L6.5 0.5" fill="none" stroke="#5e5e5e" stroke-width="0.72" stroke-linejoin="round"/></svg><span style="left:218.8px">Weidmann Unica</span><span class="cb" style="left:325.4px;width:7.4px;height:7.3px;top:1.1px;border-radius:2px;border-color:#c8c8c8 #c2c2c2 #adadad"></span></div>
<div class="row" style="top:256.63px;width:435px;background:#fff"><span class="cb" style="left:1.4px"></span><svg class="ck" style="left:1.4px" viewBox="0 0 8 9"><path d="M1.1 4 L3.5 6.4 L6.5 0.5" fill="none" stroke="#5e5e5e" stroke-width="0.72" stroke-linejoin="round"/></svg><span style="left:11.5px">3sa</span><span style="left:36.6px">3</span><span style="left:41.6px">sa</span><span style="left:77.4px">S HS 1997</span><span class="cb" style="left:210px"></span><svg class="ck" style="left:210px" viewBox="0 0 8 9"><path d="M1.1 4 L3.5 6.4 L6.5 0.5" fill="none" stroke="#5e5e5e" stroke-width="0.72" stroke-linejoin="round"/></svg><span style="left:218.8px">Wanner Alexander</span><span class="cb" style="left:325.4px;width:7.4px;height:7.3px;top:1.1px;border-radius:2px;border-color:#c8c8c8 #c2c2c2 #adadad"></span></div>
<div class="row" style="top:265.82px;width:435px;background:#edf2fa"><span class="cb" style="left:1.4px"></span><svg class="ck" style="left:1.4px" viewBox="0 0 8 9"><path d="M1.1 4 L3.5 6.4 L6.5 0.5" fill="none" stroke="#5e5e5e" stroke-width="0.72" stroke-linejoin="round"/></svg><span style="left:11.5px">3sb</span><span style="left:36.6px">3</span><span style="left:41.6px">sb</span><span style="left:77.4px">S HS 1997</span><span class="cb" style="left:210px"></span><svg class="ck" style="left:210px" viewBox="0 0 8 9"><path d="M1.1 4 L3.5 6.4 L6.5 0.5" fill="none" stroke="#5e5e5e" stroke-width="0.72" stroke-linejoin="round"/></svg><span style="left:218.8px">Roth Detlef, Dr.</span><span class="cb" style="left:325.4px;width:7.4px;height:7.3px;top:1.1px;border-radius:2px;border-color:#c8c8c8 #c2c2c2 #adadad"></span></div>
<div class="row" style="top:275.01px;width:435px;background:#fff"><span class="cb" style="left:1.4px"></span><svg class="ck" style="left:1.4px" viewBox="0 0 8 9"><path d="M1.1 4 L3.5 6.4 L6.5 0.5" fill="none" stroke="#5e5e5e" stroke-width="0.72" stroke-linejoin="round"/></svg><span style="left:11.5px">4fa</span><span style="left:36.6px">4</span><span style="left:41.6px">fa</span><span style="left:77.4px">F-GN HS 2007, F-PK HS 2007, F-S HS 2007</span><span class="cb" style="left:210px"></span><svg class="ck" style="left:210px" viewBox="0 0 8 9"><path d="M1.1 4 L3.5 6.4 L6.5 0.5" fill="none" stroke="#5e5e5e" stroke-width="0.72" stroke-linejoin="round"/></svg><span style="left:218.8px">Steinmann Brigitta</span><span class="cb" style="left:325.4px;width:7.4px;height:7.3px;top:1.1px;border-radius:2px;border-color:#c8c8c8 #c2c2c2 #adadad"></span></div>
<div class="row" style="top:284.20px;width:435px;background:#edf2fa"><span class="cb" style="left:1.4px"></span><svg class="ck" style="left:1.4px" viewBox="0 0 8 9"><path d="M1.1 4 L3.5 6.4 L6.5 0.5" fill="none" stroke="#5e5e5e" stroke-width="0.72" stroke-linejoin="round"/></svg><span style="left:11.5px">4ma</span><span style="left:36.6px">4</span><span style="left:41.6px">ma</span><span style="left:77.4px">M HS 1997</span><span class="cb" style="left:210px"></span><svg class="ck" style="left:210px" viewBox="0 0 8 9"><path d="M1.1 4 L3.5 6.4 L6.5 0.5" fill="none" stroke="#5e5e5e" stroke-width="0.72" stroke-linejoin="round"/></svg><span style="left:218.8px">Engeli Roman</span><span class="cb" style="left:325.4px;width:7.4px;height:7.3px;top:1.1px;border-radius:2px;border-color:#c8c8c8 #c2c2c2 #adadad"></span></div>
<div class="row" style="top:293.39px;width:435px;background:#fff"><span class="cb" style="left:1.4px"></span><svg class="ck" style="left:1.4px" viewBox="0 0 8 9"><path d="M1.1 4 L3.5 6.4 L6.5 0.5" fill="none" stroke="#5e5e5e" stroke-width="0.72" stroke-linejoin="round"/></svg><span style="left:11.5px">4mb</span><span style="left:36.6px">4</span><span style="left:41.6px">mb</span><span style="left:77.4px">M HS 1997</span><span class="cb" style="left:210px"></span><svg class="ck" style="left:210px" viewBox="0 0 8 9"><path d="M1.1 4 L3.5 6.4 L6.5 0.5" fill="none" stroke="#5e5e5e" stroke-width="0.72" stroke-linejoin="round"/></svg><span style="left:218.8px">De Pizzol Eric</span><span class="cb" style="left:325.4px;width:7.4px;height:7.3px;top:1.1px;border-radius:2px;border-color:#c8c8c8 #c2c2c2 #adadad"></span></div>
<div class="row" style="top:302.58px;width:435px;background:#edf2fa"><span class="cb" style="left:1.4px"></span><svg class="ck" style="left:1.4px" viewBox="0 0 8 9"><path d="M1.1 4 L3.5 6.4 L6.5 0.5" fill="none" stroke="#5e5e5e" stroke-width="0.72" stroke-linejoin="round"/></svg><span style="left:11.5px">4mc</span><span style="left:36.6px">4</span><span style="left:41.6px">mc</span><span style="left:77.4px">M HS 1997</span><span class="cb" style="left:210px"></span><svg class="ck" style="left:210px" viewBox="0 0 8 9"><path d="M1.1 4 L3.5 6.4 L6.5 0.5" fill="none" stroke="#5e5e5e" stroke-width="0.72" stroke-linejoin="round"/></svg><span style="left:218.8px;letter-spacing:.18px">Heuberger-Brauchli Barbara</span><span class="cb" style="left:325.4px;width:7.4px;height:7.3px;top:1.1px;border-radius:2px;border-color:#c8c8c8 #c2c2c2 #adadad"></span></div>
<div class="row" style="top:311.77px;width:435px;background:#fff"><span class="cb" style="left:1.4px"></span><svg class="ck" style="left:1.4px" viewBox="0 0 8 9"><path d="M1.1 4 L3.5 6.4 L6.5 0.5" fill="none" stroke="#5e5e5e" stroke-width="0.72" stroke-linejoin="round"/></svg><span style="left:11.5px">4na</span><span style="left:36.6px">4</span><span style="left:41.6px">na</span><span style="left:77.4px">N HS 1997</span><span class="cb" style="left:210px"></span><svg class="ck" style="left:210px" viewBox="0 0 8 9"><path d="M1.1 4 L3.5 6.4 L6.5 0.5" fill="none" stroke="#5e5e5e" stroke-width="0.72" stroke-linejoin="round"/></svg><span style="left:218.8px">Düringer Barbara</span><span class="cb" style="left:325.4px;width:7.4px;height:7.3px;top:1.1px;border-radius:2px;border-color:#c8c8c8 #c2c2c2 #adadad"></span></div>
<div class="row" style="top:320.96px;width:435px;background:#edf2fa"><span class="cb" style="left:1.4px"></span><svg class="ck" style="left:1.4px" viewBox="0 0 8 9"><path d="M1.1 4 L3.5 6.4 L6.5 0.5" fill="none" stroke="#5e5e5e" stroke-width="0.72" stroke-linejoin="round"/></svg><span style="left:11.5px">4nb</span><span style="left:36.6px">4</span><span style="left:41.6px">nb</span><span style="left:77.4px">N HS 1997</span><span class="cb" style="left:210px"></span><svg class="ck" style="left:210px" viewBox="0 0 8 9"><path d="M1.1 4 L3.5 6.4 L6.5 0.5" fill="none" stroke="#5e5e5e" stroke-width="0.72" stroke-linejoin="round"/></svg><span style="left:218.8px">Engeler Beat</span><span class="cb" style="left:325.4px;width:7.4px;height:7.3px;top:1.1px;border-radius:2px;border-color:#c8c8c8 #c2c2c2 #adadad"></span></div>
<div class="row" style="top:330.15px;width:435px;background:#fff"><span class="cb" style="left:1.4px"></span><svg class="ck" style="left:1.4px" viewBox="0 0 8 9"><path d="M1.1 4 L3.5 6.4 L6.5 0.5" fill="none" stroke="#5e5e5e" stroke-width="0.72" stroke-linejoin="round"/></svg><span style="left:11.5px">4sa</span><span style="left:36.6px">4</span><span style="left:41.6px">sa</span><span style="left:77.4px">S HS 1997</span><span class="cb" style="left:210px"></span><svg class="ck" style="left:210px" viewBox="0 0 8 9"><path d="M1.1 4 L3.5 6.4 L6.5 0.5" fill="none" stroke="#5e5e5e" stroke-width="0.72" stroke-linejoin="round"/></svg><span style="left:218.8px">Bernhart Lukas</span><span class="cb" style="left:325.4px;width:7.4px;height:7.3px;top:1.1px;border-radius:2px;border-color:#c8c8c8 #c2c2c2 #adadad"></span></div>
<div class="row" style="top:339.34px;width:435px;background:#edf2fa"><span class="cb" style="left:1.4px"></span><svg class="ck" style="left:1.4px" viewBox="0 0 8 9"><path d="M1.1 4 L3.5 6.4 L6.5 0.5" fill="none" stroke="#5e5e5e" stroke-width="0.72" stroke-linejoin="round"/></svg><span style="left:11.5px"></span><span style="left:36.6px"></span><span style="left:41.6px"></span><span style="left:77.4px"></span><span class="cb" style="left:210px"></span><svg class="ck" style="left:210px" viewBox="0 0 8 9"><path d="M1.1 4 L3.5 6.4 L6.5 0.5" fill="none" stroke="#5e5e5e" stroke-width="0.72" stroke-linejoin="round"/></svg><span style="left:218.8px"></span><span class="cb" style="left:325.4px;width:7.4px;height:7.3px;top:1.1px;border-radius:2px;border-color:#c8c8c8 #c2c2c2 #adadad"></span></div>
</div>
<div class="hdr" style="left:207px;width:442px"><span style="left:8px;width:26px">Klasse</span><span style="left:34.5px;width:4px"></span><span style="left:39.3px;width:36px;letter-spacing:.1px">Folgeklasse</span><span style="left:75.5px;width:132px">Profile</span><span style="left:207px;width:10px"></span><span style="left:216.5px;width:106px">Klassenlehrperson</span><span style="left:323px;width:10px"></span><span style="left:333px;width:100px">Name</span><span style="left:434.5px;width:8px"></span></div>
<div style="left:641px;top:59px;width:9px;height:332px;background:linear-gradient(90deg,#d8d8d8,#fafafa 40%,#f2f2f2);border-left:1px solid #b5b5b5"></div>
<div style="left:642.3px;top:62px;width:7.1px;height:304px;border-radius:3.4px;background:linear-gradient(90deg,#3f72cf,#6ea8f2 22%,#a5cffb 42%,#6aa6f3 65%,#5a96ec 85%,#4178d2);box-shadow:inset 0 -1.5px 1.5px #2a5cc8,inset 0 1.5px 1.5px #2a5cc8"></div>
<div style="left:641px;top:373px;width:9px;height:18px;background:linear-gradient(90deg,#e4e4e4,#fbfbfb 50%,#ededed);border:1px solid #c0c0c0;border-right:0"></div>
<div style="left:642px;top:382px;width:8px;height:.8px;background:#c0c0c0"></div>
<svg style="left:641px;top:373px" width="9" height="18" viewBox="0 0 9 18"><path d="M4.9 3.6 L6.5 6.2 H3.3Z M4.9 14.9 L6.5 12.3 H3.3Z" fill="#222"/></svg>

<div style="left:205.3px;top:391px;width:444.7px;height:9px;background:#ebebeb;border-top:1px solid #a0a0a0"></div>
<div style="left:380px;top:391.5px;width:28px;height:9px;line-height:9px;text-align:right;color:#444">37</div>
<div style="left:414.3px;top:391.5px;height:9px;line-height:9px;color:#444">Klassen</div>
<div style="left:205.3px;top:400px;width:444.7px;height:9px;background:linear-gradient(#fdfdfd 50%,#ececec 58%);border-top:1px solid #ababab"></div>
<div style="left:206px;top:401px;width:20px;height:8px;border-right:1px solid #b0b0b0;background:linear-gradient(#fff,#f0f0f0)"></div>
<div style="left:209.6px;top:401.2px;width:6.2px;height:7.8px;border-left:1px solid #c8c8c8;border-top:.8px solid #7cc05a;border-right:1px solid #5aaa3a;background:linear-gradient(90deg,#e8e8e8,#fff 40%,#dfe8f5 50%,#fff 60%)"></div>
<svg style="left:218.9px;top:404px" width="4" height="2.4" viewBox="0 0 4 2.4"><path d="M0 0H4L2 2.4Z" fill="#222"/></svg>

<div style="left:0;top:409px;width:650px;height:17px;background:linear-gradient(#c8c8c8,#b3b5b7 30%,#9b9da0);border-top:1px solid #9a9a9a"></div>
<div style="left:10.8px;top:413.2px;font-size:6.3px;line-height:9px;color:#555;white-space:nowrap;text-shadow:0 .6px 0 rgba(255,255,255,.45)">7r gmbh</div>
<svg style="left:42px;top:413px" width="7" height="9" viewBox="0 0 7 9"><ellipse cx="3.5" cy="4.6" rx="3.4" ry="4.2" fill="#dfe3e6" opacity=".45"/><path d="M.8 8.1Q.5 4.8 3.5 4.2Q6.5 4.8 6.2 8.1Z" fill="#e6391d"/><path d="M3.5 3.2L4.7 8.1H2.3Z" fill="#fff"/><circle cx="3.6" cy="2.6" r="1.9" fill="#151515"/><path d="M3.4 2.6L4 4.4L2.9 4.4Z" fill="#f6d24a"/></svg>
<div style="left:51.5px;top:413.2px;font-size:6.3px;line-height:9px;color:#555;white-space:nowrap;text-shadow:0 .6px 0 rgba(255,255,255,.45)">robert (4)</div>
<div style="left:0;top:413.2px;width:650px;text-align:center;font-size:6px;line-height:9px;color:#5a5a5a;white-space:nowrap;text-shadow:0 .6px 0 rgba(255,255,255,.45)"><span style="position:relative;left:3.5px">Aktuelle Periode: HS 2009</span></div>

</div></body></html>
